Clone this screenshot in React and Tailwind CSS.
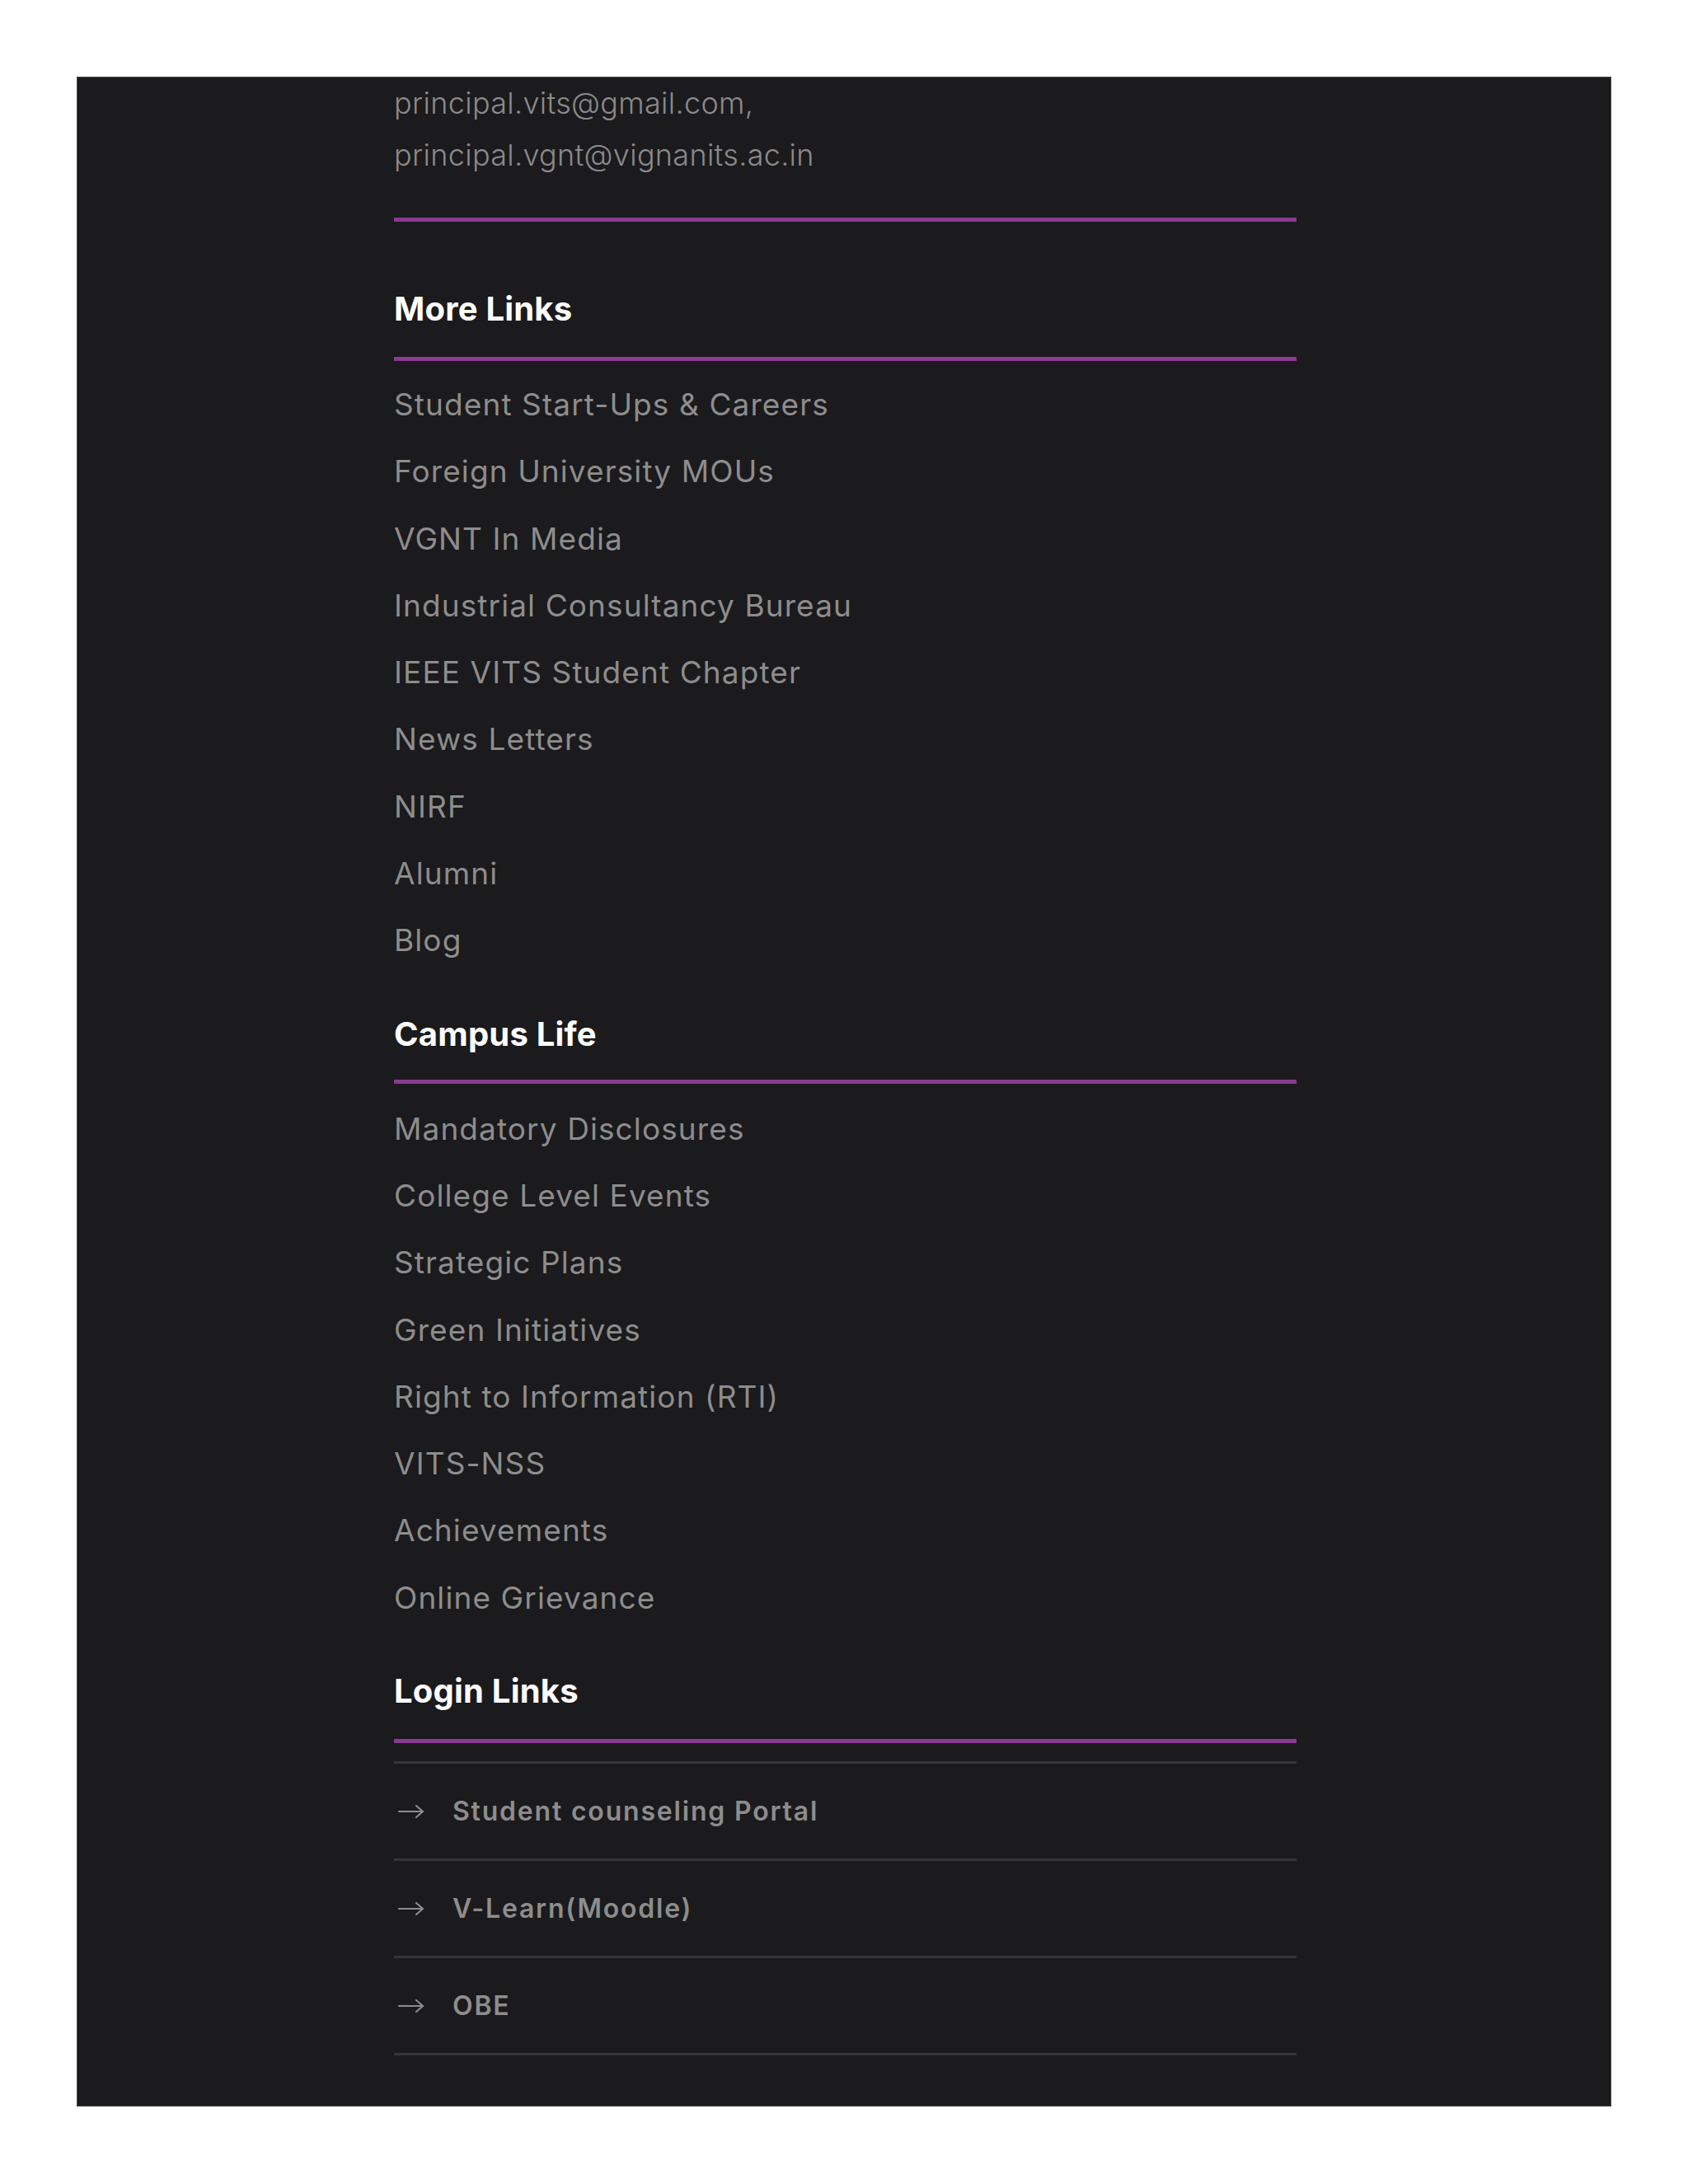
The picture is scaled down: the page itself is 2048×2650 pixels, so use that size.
import React from "react";

const font = { fontFamily: "Inter, 'Open Sans', sans-serif" };

const moreLinks = [
  "Student Start-Ups & Careers",
  "Foreign University MOUs",
  "VGNT In Media",
  "Industrial Consultancy Bureau",
  "IEEE VITS Student Chapter",
  "News Letters",
  "NIRF",
  "Alumni",
  "Blog",
];

const campusLife = [
  "Mandatory Disclosures",
  "College Level Events",
  "Strategic Plans",
  "Green Initiatives",
  "Right to Information (RTI)",
  "VITS-NSS",
  "Achievements",
  "Online Grievance",
];

const loginLinks = ["Student counseling Portal", "V-Learn(Moodle)", "OBE"];

function Heading({ children, mt }) {
  return (
    <h3
      className={`h-[60px] leading-[60px] text-[40px] font-bold text-white tracking-[0.2px] ${mt}`}
    >
      {children}
    </h3>
  );
}

function Purple({ mt }) {
  return <div className={`h-[5px] bg-[#8b3a93] ${mt}`} />;
}

function LinkItem({ children }) {
  return (
    <a
      href="#"
      className="block h-[81.3px] leading-[81.3px] text-[37px] font-normal text-[#8d8d8d] tracking-[1.1px] whitespace-nowrap"
    >
      {children}
    </a>
  );
}

function Arrow() {
  return (
    <svg width="34" height="20" viewBox="0 0 34 20" fill="none" className="shrink-0">
      <path d="M2 10H31" stroke="#8d8d8d" strokeWidth="2.2" strokeLinecap="round" />
      <path d="M23 3L31 10L23 17" stroke="#8d8d8d" strokeWidth="2.2" strokeLinecap="round" strokeLinejoin="round" />
    </svg>
  );
}

export default function App() {
  return (
    <div className="min-h-[2650px] w-[2048px] bg-white pt-[93px] pl-[93px]" style={font}>
      <div className="w-[1862px] h-[2463px] bg-[#1b1a1c] border border-[#4a4a4a] overflow-hidden">
        <div className="ml-[384px] w-[1095px]">
          <div className="text-[36px] font-light text-[#8a8a8a] tracking-[0.3px]">
            <div className="h-[63px] leading-[63px]">principal.vits@gmail.com,</div>
            <div className="h-[63px] leading-[63px]">principal.vgnt@vignanits.ac.in</div>
          </div>
          <Purple mt="mt-[44px]" />

          <Heading mt="mt-[76px]">More Links</Heading>
          <Purple mt="mt-[28px]" />
          <div className="mt-[12px]">
            {moreLinks.map((l) => (
              <LinkItem key={l}>{l}</LinkItem>
            ))}
          </div>

          <Heading mt="mt-[43px]">Campus Life</Heading>
          <Purple mt="mt-[25px]" />
          <div className="mt-[14px]">
            {campusLife.map((l) => (
              <LinkItem key={l}>{l}</LinkItem>
            ))}
          </div>

          <Heading mt="mt-[43px]">Login Links</Heading>
          <Purple mt="mt-[28px]" />
          <div className="mt-[22px] h-[3px] bg-[#363636]" />
          {loginLinks.map((l) => (
            <div key={l}>
              <a
                href="#"
                className="flex items-center h-[115px] gap-[33px] pl-[4px] text-[32px] font-semibold text-[#8d8d8d] tracking-[1.8px]"
              >
                <Arrow />
                <span>{l}</span>
              </a>
              <div className="h-[3px] bg-[#363636]" />
            </div>
          ))}
        </div>
      </div>
    </div>
  );
}
